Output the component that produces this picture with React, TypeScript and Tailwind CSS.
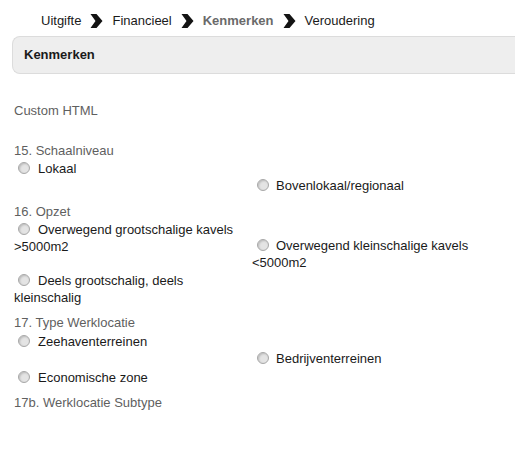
import type { ReactNode } from 'react'

function Arrow() {
  return (
    <svg width="13" height="16" viewBox="0 0 13 16" className="mx-[9px] shrink-0">
      <polygon points="0.5,1 6.5,1 12.5,8 6.5,15 0.5,15 5.5,8" fill="#141414" />
    </svg>
  )
}

function Radio() {
  return (
    <span className="inline-block w-[12px] h-[12px] rounded-full border border-[#a8a8a8] bg-[#e4e4e4] shadow-[inset_1px_1px_2px_rgba(0,0,0,0.18)] align-[-1px]" />
  )
}

function Option({ children, right, className = '' }: { children: ReactNode; right?: boolean; className?: string }) {
  return (
    <div className={`leading-[17px] text-[#1a1a1a] ${className}`}>
      <span className={right ? 'ml-[5px] mr-[7px]' : 'ml-[4px] mr-[8px]'}>
        <Radio />
      </span>
      {children}
    </div>
  )
}

function Label({ children, className = '' }: { children: ReactNode; className?: string }) {
  return <div className={`leading-[18px] text-[#5f5f5f] ${className}`}>{children}</div>
}

export default function App() {
  return (
    <div className="w-[515px] h-[460px] bg-white overflow-hidden text-[13px] font-['Liberation_Sans',Arial,sans-serif]">
      {/* Breadcrumb */}
      <div className="flex items-center pl-[41px] pt-[12px] h-[29px] leading-[17px] text-[#1a1a1a]">
        <span>Uitgifte</span>
        <Arrow />
        <span>Financieel</span>
        <Arrow />
        <span className="font-bold text-[#6a6a6a]">Kenmerken</span>
        <Arrow />
        <span>Veroudering</span>
      </div>

      {/* Section header */}
      <div className="ml-[12px] mt-[7px] h-[38px] flex items-center pl-[11px] bg-[#eeeeee] border-y border-l border-[#dcdcdc] rounded-l-lg font-bold text-[#1a1a1a]">
        Kenmerken
      </div>

      <div className="pl-[14px]">
        <div className="mt-[28px] leading-[17px] text-[#5f5f5f]">Custom HTML</div>

        {/* 15 */}
        <Label className="mt-[23px]">15. Schaalniveau</Label>
        <div className="grid grid-cols-[238px_1fr] auto-rows-[17px]">
          <Option className="col-start-1 row-start-1">Lokaal</Option>
          <Option right className="col-start-2 row-start-2">Bovenlokaal/regionaal</Option>
        </div>

        {/* 16 */}
        <Label className="mt-[9px]">16. Opzet</Label>
        <div className="grid grid-cols-[238px_1fr] auto-rows-[17px]">
          <Option className="col-start-1 row-start-1 row-span-2">
            Overwegend grootschalige kavels
            <br />
            &gt;5000m2
          </Option>
          <Option right className="col-start-2 row-start-2 row-span-2 -mt-[1px]">
            Overwegend kleinschalige kavels
            <br />
            &lt;5000m2
          </Option>
          <Option className="col-start-1 row-start-4 row-span-2">
            Deels grootschalig, deels
            <br />
            kleinschalig
          </Option>
        </div>

        {/* 17 */}
        <Label className="mt-[8px]">17. Type Werklocatie</Label>
        <div className="grid grid-cols-[238px_1fr] auto-rows-[17px] pt-[1px]">
          <Option className="col-start-1 row-start-1">Zeehaventerreinen</Option>
          <Option right className="col-start-2 row-start-2">Bedrijventerreinen</Option>
          <Option className="col-start-1 row-start-3 mt-[2px]">Economische zone</Option>
        </div>

        <Label className="mt-[10px]">17b. Werklocatie Subtype</Label>
      </div>
    </div>
  )
}
